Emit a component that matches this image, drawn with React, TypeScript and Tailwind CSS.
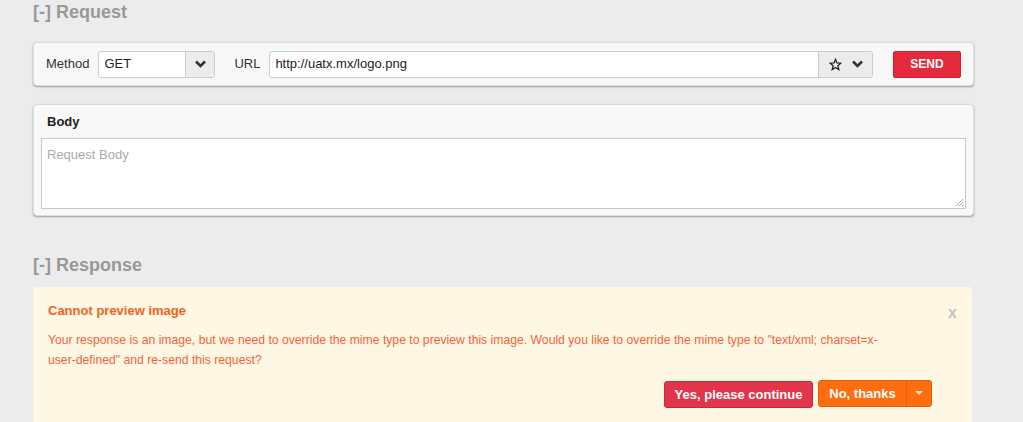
import React from "react";

const Chevron = () => (
  <svg width="11" height="8" viewBox="0 0 11 8">
    <path d="M1 1.5 L5.5 6 L10 1.5" fill="none" stroke="#333" strokeWidth="2.6" />
  </svg>
);

const Star = () => (
  <svg width="13" height="13" viewBox="0 0 24 24">
    <path
      d="M12 2.5 L14.7 9.1 L21.8 9.6 L16.4 14.2 L18.1 21.2 L12 17.4 L5.9 21.2 L7.6 14.2 L2.2 9.6 L9.3 9.1 Z"
      fill="none"
      stroke="#222"
      strokeWidth="2.4"
      strokeLinejoin="miter"
    />
  </svg>
);

export default function App() {
  return (
    <div
      className="w-[1023px] h-[422px] overflow-hidden bg-[#ececec] text-[13px] text-[#333]"
      style={{ fontFamily: '"Liberation Sans", Arial, sans-serif' }}
    >
      <div className="pl-[33px] pr-[49px]">
        <h2 className="text-[18px] font-bold text-[#999] leading-[20px] pt-[2px] h-[42px]">[-] Request</h2>

        <div className="bg-[#f8f8f8] rounded-[4px] border border-[#dcdcdc] shadow-[0_1px_2px_rgba(0,0,0,0.35)] h-[44px] flex items-center pl-[12px] pr-[12px]">
          <span className="mr-[9px]">Method</span>
          <div className="flex h-[27px] w-[117px] border border-[#ccc] rounded-[3px] overflow-hidden bg-white">
            <div className="flex-1 flex items-center pl-[5px] text-[13px] text-[#222]">GET</div>
            <div className="w-[29px] flex items-center justify-center bg-[#ececec] border-l border-[#ccc]">
              <Chevron />
            </div>
          </div>
          <span className="ml-[19px] mr-[9px]">URL</span>
          <div className="flex h-[27px] flex-1 border border-[#ccc] rounded-[3px] overflow-hidden bg-white">
            <div className="flex-1 flex items-center pl-[5px] text-[13px] text-[#222]">http://uatx.mx/logo.png</div>
            <div className="w-[54px] flex items-center justify-center gap-[10px] bg-[#ececec] border-l border-[#ccc]">
              <Star />
              <Chevron />
            </div>
          </div>
          <button className="ml-[20px] h-[27px] w-[68px] rounded-[2px] bg-[#e5293d] border border-[#d41e32] text-white font-bold text-[12px]">
            SEND
          </button>
        </div>

        <div className="mt-[18px] bg-[#f8f8f8] rounded-[4px] border border-[#dcdcdc] shadow-[0_1px_2px_rgba(0,0,0,0.35)] h-[112px] px-[7px]">
          <div className="h-[33px] flex items-center pl-[6px] font-bold text-[13px] text-[#222]">Body</div>
          <div className="relative h-[71px] bg-white border border-[#c8c8c8] px-[5px] pt-[6px] text-[#aaa]">
            Request Body
            <svg className="absolute right-[1px] bottom-[1px]" width="10" height="10" viewBox="0 0 10 10">
              <path d="M9 2 L2 9 M9 5 L5 9 M9 8 L8 9" stroke="#aaa" strokeWidth="1" />
            </svg>
          </div>
        </div>

        <h2 className="mt-[39px] text-[18px] font-bold text-[#999] leading-[20px] h-[32px]">[-] Response</h2>

        <div className="bg-[#fdf7e3] rounded-[3px] mr-[2px] h-[160px] pl-[15px] pr-[22px] pt-[16px] relative">
          <span className="absolute right-[15px] top-[17px] text-[#c4c4c4] font-bold text-[16px] leading-[18px]">x</span>
          <div className="text-[#f6621e] font-bold text-[13px] leading-[16px]">Cannot preview image</div>
          <p className="mt-[11px] text-[#f4643a] text-[12.2px] leading-[20px] pr-[48px]">
            Your response is an image, but we need to override the mime type to preview this image. Would you like to override the mime type to "text/xml; charset=x-user-defined" and re-send this request?
          </p>
          <div className="mt-[10px] flex justify-end items-start pr-[18px]">
            <button className="mt-[1px] h-[27px] w-[149px] rounded-[3px] bg-[#e2344a] border border-[#c8283b] text-white font-bold text-[13px]">
              Yes, please continue
            </button>
            <div className="ml-[5px] flex h-[27px] w-[114px] rounded-[3px] bg-[#fe6d0f] border border-[#e85f05] overflow-hidden text-white">
              <div className="w-[88px] flex items-center justify-center font-bold text-[13px] border-r border-[#e85f05]">No, thanks</div>
              <div className="flex-1 flex items-center justify-center">
                <svg width="8" height="5" viewBox="0 0 8 5"><path d="M0 0 L8 0 L4 4 Z" fill="#fde0c8" /></svg>
              </div>
            </div>
          </div>
        </div>
      </div>
    </div>
  );
}
